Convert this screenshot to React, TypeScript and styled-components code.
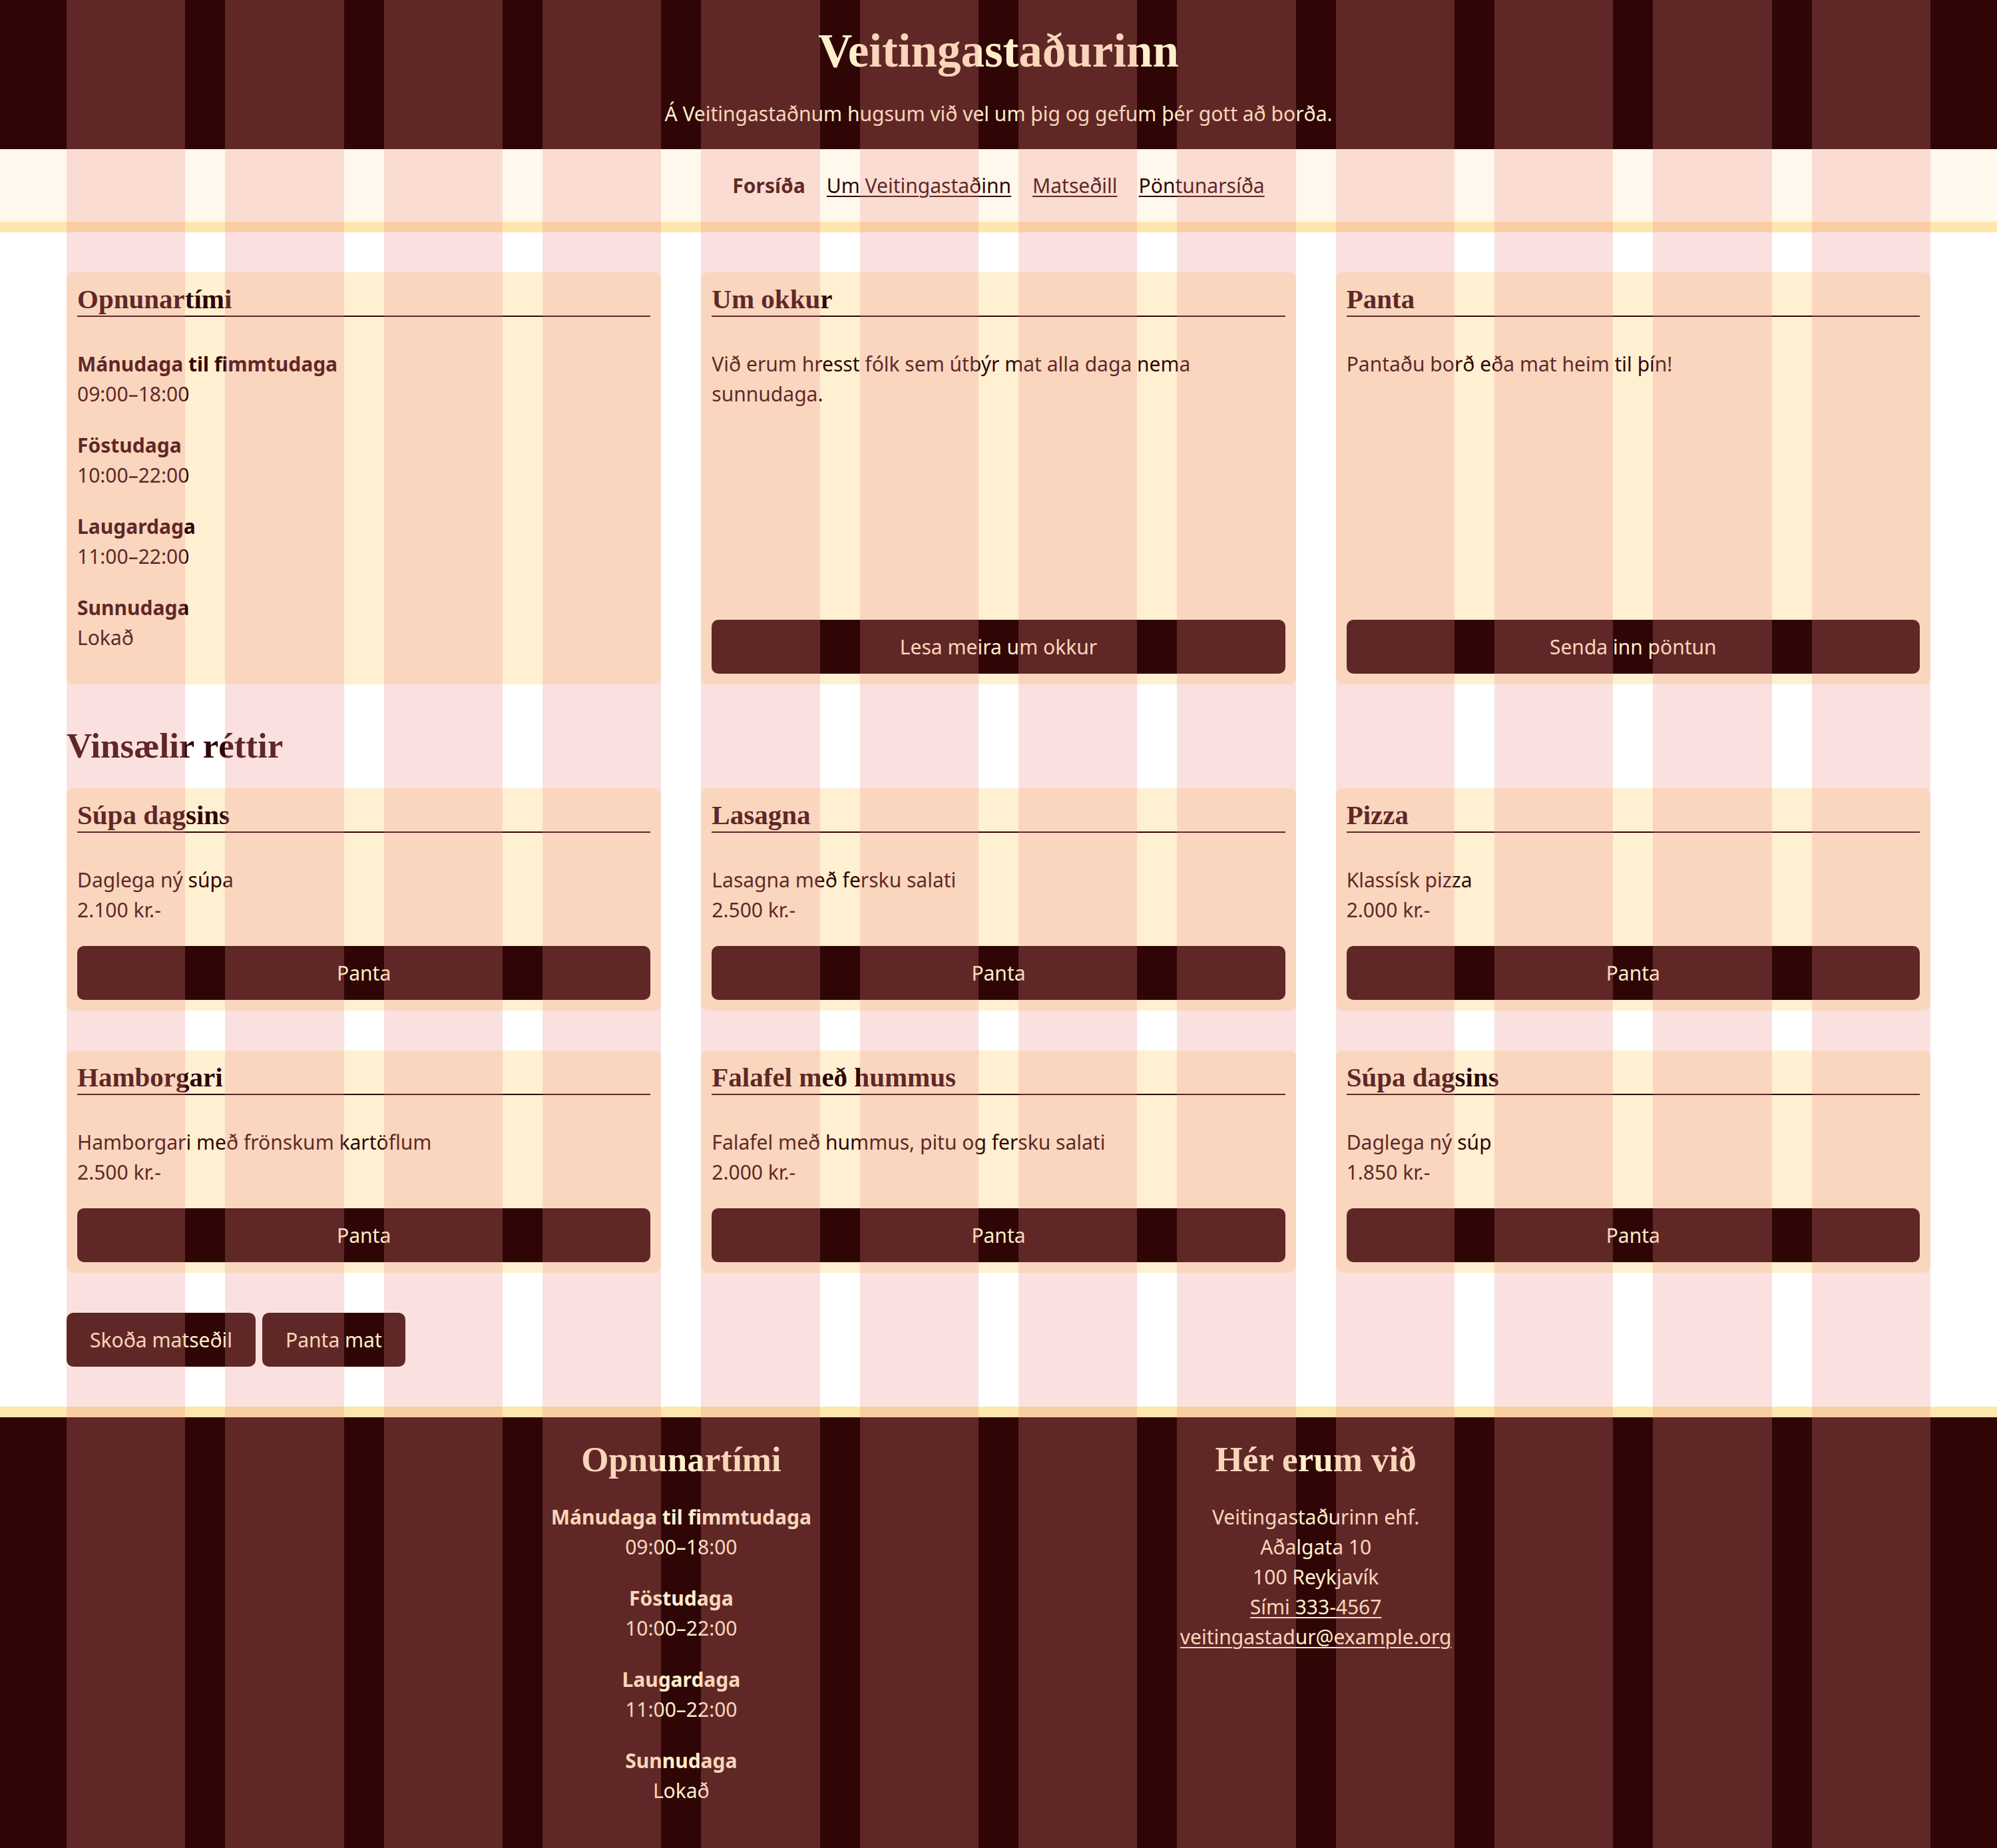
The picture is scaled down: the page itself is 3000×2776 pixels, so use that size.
import React from "react";
import styled, { createGlobalStyle } from "styled-components";

const DARK = "#300506";
const LIGHT = "#ffefcc";
const CARD = "#fff0d2";

const GlobalStyle = createGlobalStyle`
  *, *::before, *::after { box-sizing: border-box; }
  html, body { margin: 0; padding: 0; }
  body {
    background: #ffffff;
    color: ${DARK};
    font-family: "Noto Sans", "Open Sans", sans-serif;
    font-size: 30px;
    line-height: 45px;
  }
`;

const Page = styled.div`
  position: relative;
  width: 100%;
`;

const Overlay = styled.div`
  position: absolute;
  inset: 0;
  pointer-events: none;
  z-index: 10;
  display: flex;
  justify-content: center;
`;

const OverlayGrid = styled.div`
  width: 100%;
  max-width: 2800px;
  height: 100%;
  display: grid;
  grid-template-columns: repeat(12, 1fr);
  column-gap: 60px;
`;

const OverlayColumn = styled.div`
  background: rgba(236, 139, 137, 0.26);
`;

const Header = styled.header`
  background: ${DARK};
  color: ${LIGHT};
  text-align: center;
  padding: 34px 0 31px;
`;

const SiteTitle = styled.h1`
  margin: 0 0 30px;
  font-family: "Liberation Serif", "Times New Roman", serif;
  font-weight: 700;
  font-size: 71px;
  line-height: 84px;
`;

const Tagline = styled.p`
  margin: 0;
`;

const Nav = styled.nav`
  background: #fff8ec;
  border-bottom: 16px solid #ffe6ad;
  padding: 32px 0;
  display: flex;
  justify-content: center;
  gap: 32px;
`;

const NavLink = styled.a<{ $current?: boolean }>`
  color: ${DARK};
  font-weight: ${(p) => (p.$current ? 700 : 400)};
  text-decoration: ${(p) => (p.$current ? "none" : "underline")};
  text-decoration-thickness: 2px;
  text-underline-offset: 4px;
`;

const Main = styled.main`
  max-width: 2800px;
  margin: 0 auto;
  padding: 60px 0;
`;

const CardGrid = styled.div`
  display: grid;
  grid-template-columns: repeat(3, 1fr);
  gap: 60px;
`;

const Card = styled.section`
  background: ${CARD};
  border-radius: 10px;
  padding: 16px;
  display: flex;
  flex-direction: column;
`;

const CardTitle = styled.h3`
  margin: 0 0 48px;
  font-family: "Liberation Serif", "Times New Roman", serif;
  font-weight: 700;
  font-size: 41px;
  line-height: 49px;
  border-bottom: 2px solid ${DARK};
`;

const Text = styled.p`
  margin: 0 0 32px;
`;

const HoursList = styled.dl<{ $center?: boolean }>`
  margin: 0 0 32px;
  display: flex;
  flex-direction: column;
  gap: 32px;
  text-align: ${(p) => (p.$center ? "center" : "left")};
`;

const HoursGroup = styled.div``;

const Day = styled.dt`
  font-weight: 700;
`;

const Time = styled.dd`
  margin: 0;
`;

const Button = styled.a<{ $block?: boolean }>`
  display: ${(p) => (p.$block ? "block" : "inline-block")};
  margin-top: ${(p) => (p.$block ? "auto" : "0")};
  background: ${DARK};
  color: ${LIGHT};
  border-radius: 10px;
  padding: 18px 35px;
  text-align: center;
  text-decoration: none;
  white-space: nowrap;
`;

const SectionTitle = styled.h2`
  margin: 60px 0 32px;
  font-family: "Liberation Serif", "Times New Roman", serif;
  font-weight: 700;
  font-size: 53px;
  line-height: 64px;
`;

const Actions = styled.div`
  margin-top: 60px;
  display: flex;
  gap: 10px;
`;

const Footer = styled.footer`
  background: ${DARK};
  color: ${LIGHT};
  border-top: 16px solid #ffe6ad;
  padding: 31px 0 33px;
`;

const FooterGrid = styled.div`
  max-width: 2800px;
  margin: 0 auto;
  display: grid;
  grid-template-columns: repeat(12, 1fr);
  column-gap: 60px;
`;

const FooterSection = styled.section<{ $start: number }>`
  grid-column: ${(p) => p.$start} / span 4;
  text-align: center;
`;

const FooterTitle = styled.h2`
  margin: 0 0 32px;
  font-family: "Liberation Serif", "Times New Roman", serif;
  font-weight: 700;
  font-size: 53px;
  line-height: 64px;
`;

const Address = styled.address`
  font-style: normal;
`;

const FooterLink = styled.a`
  color: ${LIGHT};
  text-decoration: underline;
  text-decoration-thickness: 2px;
  text-underline-offset: 4px;
`;

const hours = [
  { day: "Mánudaga til fimmtudaga", time: "09:00–18:00" },
  { day: "Föstudaga", time: "10:00–22:00" },
  { day: "Laugardaga", time: "11:00–22:00" },
  { day: "Sunnudaga", time: "Lokað" },
];

const dishes = [
  { name: "Súpa dagsins", desc: "Daglega ný súpa", price: "2.100 kr.-" },
  { name: "Lasagna", desc: "Lasagna með fersku salati", price: "2.500 kr.-" },
  { name: "Pizza", desc: "Klassísk pizza", price: "2.000 kr.-" },
  { name: "Hamborgari", desc: "Hamborgari með frönskum kartöflum", price: "2.500 kr.-" },
  { name: "Falafel með hummus", desc: "Falafel með hummus, pitu og fersku salati", price: "2.000 kr.-" },
  { name: "Súpa dagsins", desc: "Daglega ný súp", price: "1.850 kr.-" },
];

function Hours({ center }: { center?: boolean }) {
  return (
    <HoursList $center={center}>
      {hours.map((h) => (
        <HoursGroup key={h.day}>
          <Day>{h.day}</Day>
          <Time>{h.time}</Time>
        </HoursGroup>
      ))}
    </HoursList>
  );
}

export default function App() {
  return (
    <Page>
      <GlobalStyle />
      <Header>
        <SiteTitle>Veitingastaðurinn</SiteTitle>
        <Tagline>Á Veitingastaðnum hugsum við vel um þig og gefum þér gott að borða.</Tagline>
      </Header>
      <Nav>
        <NavLink $current>Forsíða</NavLink>
        <NavLink href="#">Um Veitingastaðinn</NavLink>
        <NavLink href="#">Matseðill</NavLink>
        <NavLink href="#">Pöntunarsíða</NavLink>
      </Nav>
      <Main>
        <CardGrid>
          <Card>
            <CardTitle>Opnunartími</CardTitle>
            <Hours />
          </Card>
          <Card>
            <CardTitle>Um okkur</CardTitle>
            <Text>Við erum hresst fólk sem útbýr mat alla daga nema sunnudaga.</Text>
            <Button $block href="#">Lesa meira um okkur</Button>
          </Card>
          <Card>
            <CardTitle>Panta</CardTitle>
            <Text>Pantaðu borð eða mat heim til þín!</Text>
            <Button $block href="#">Senda inn pöntun</Button>
          </Card>
        </CardGrid>

        <SectionTitle>Vinsælir réttir</SectionTitle>
        <CardGrid>
          {dishes.map((d, i) => (
            <Card key={i}>
              <CardTitle>{d.name}</CardTitle>
              <Text>
                {d.desc}
                <br />
                {d.price}
              </Text>
              <Button $block href="#">Panta</Button>
            </Card>
          ))}
        </CardGrid>

        <Actions>
          <Button href="#">Skoða matseðil</Button>
          <Button href="#">Panta mat</Button>
        </Actions>
      </Main>
      <Footer>
        <FooterGrid>
          <FooterSection $start={3}>
            <FooterTitle>Opnunartími</FooterTitle>
            <Hours center />
          </FooterSection>
          <FooterSection $start={7}>
            <FooterTitle>Hér erum við</FooterTitle>
            <Address>
              Veitingastaðurinn ehf.
              <br />
              Aðalgata 10
              <br />
              100 Reykjavík
              <br />
              <FooterLink href="#">Sími 333-4567</FooterLink>
              <br />
              <FooterLink href="#">veitingastadur@example.org</FooterLink>
            </Address>
          </FooterSection>
        </FooterGrid>
      </Footer>
      <Overlay>
        <OverlayGrid>
          {Array.from({ length: 12 }).map((_, i) => (
            <OverlayColumn key={i} />
          ))}
        </OverlayGrid>
      </Overlay>
    </Page>
  );
}
